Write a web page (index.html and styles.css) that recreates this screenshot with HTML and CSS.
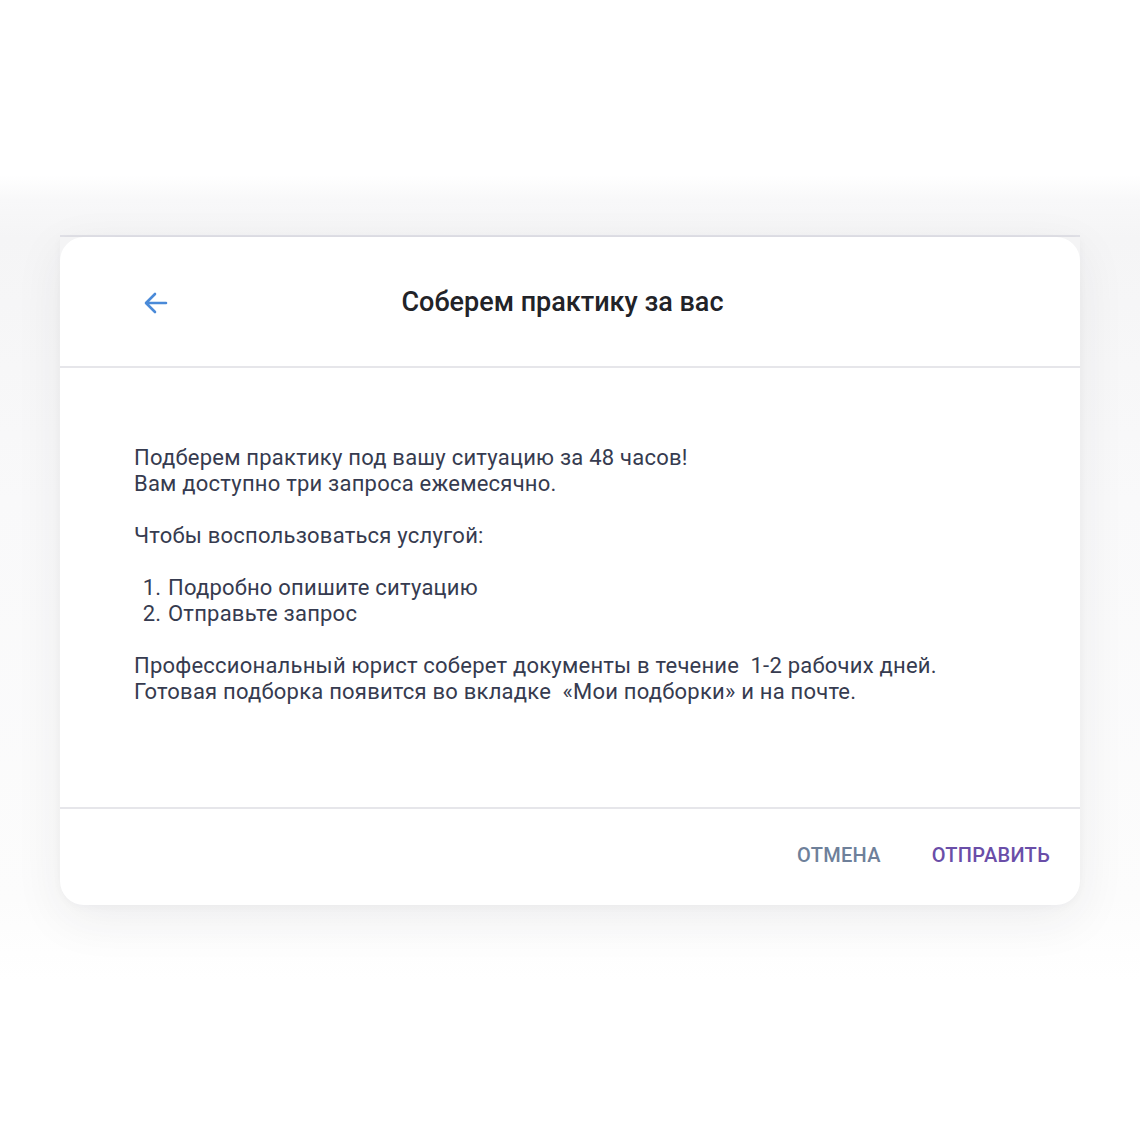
FILE: index.html
```html
<!DOCTYPE html>
<html lang="ru">
<head>
<meta charset="utf-8">
<link rel="stylesheet" href="styles.css">
</head>
<body>
<div class="stage">
  <div class="band"><div class="edge"></div></div>
  <div class="dialog">
    <div class="dialog-header">
      <button class="back" aria-label="Назад">
        <svg width="24" height="22" viewBox="0 0 24 22"><path d="M22 11H3M11 2L2 11l9 9" fill="none" stroke="#4a8ad8" stroke-width="2.6" stroke-linecap="round" stroke-linejoin="round"/></svg>
      </button>
      <h1 class="title">Соберем практику за вас</h1>
    </div>
    <div class="dialog-body">
      <p>Подберем практику под вашу ситуацию за 48 часов!<br>Вам доступно три запроса ежемесячно.</p>
      <p>Чтобы воспользоваться услугой:</p>
      <ol class="steps">
        <li>Подробно опишите ситуацию</li>
        <li>Отправьте запрос</li>
      </ol>
      <p>Профессиональный юрист соберет документы в течение&nbsp; 1-2 рабочих дней.<br>Готовая подборка появится во вкладке&nbsp; «Мои подборки» и на почте.</p>
    </div>
    <div class="dialog-footer">
      <button class="btn btn-cancel">Отмена</button>
      <button class="btn btn-send">Отправить</button>
    </div>
  </div>
</div>
</body>
</html>
```
FILE: styles.css
```css
html, body {
  margin: 0;
  padding: 0;
  background: #ffffff;
}
body {
  font-family: Roboto, "Noto Sans", sans-serif;
  width: 1140px;
  height: 1140px;
  overflow: hidden;
}
.stage {
  padding-top: 175px;
  background: linear-gradient(to bottom, #ffffff 0px, #ffffff 175px, #f8f8f9 200px, #f5f5f6 237px, #f9f9fa 500px, #fcfcfc 900px, #ffffff 980px);
  height: 810px;
}
.band {
  height: 62px;
  display: flex;
  align-items: flex-end;
}
.edge {
  margin: 0 60px;
  flex: 1;
  height: 2px;
  background: #e2e2e8;
}
.dialog {
  margin: 0 60px;
  height: 668px;
  background: #ffffff;
  border-radius: 0 0 24px 24px;
  box-shadow: 0 14px 50px rgba(40, 40, 60, 0.07), 0 2px 10px rgba(40, 40, 60, 0.03);
  display: flex;
  flex-direction: column;
  position: relative;
}
.dialog::before {
  content: "";
  position: absolute;
  left: 0;
  right: 0;
  top: 0;
  height: 24px;
  background: #f4f4f5;
  z-index: 0;
}
.dialog::after {
  content: "";
  position: absolute;
  left: 0;
  right: 0;
  top: 0;
  height: 48px;
  background: #ffffff;
  border-radius: 24px 24px 0 0;
  z-index: 0;
}
.dialog > * {
  position: relative;
  z-index: 1;
}
.dialog-header {
  height: 129px;
  border-bottom: 2px solid #e6e6ea;
  display: flex;
  align-items: center;
  padding: 0 123px 0 84px;
}
.back {
  border: 0;
  background: none;
  padding: 0;
  width: 24px;
  height: 22px;
  display: flex;
  margin-top: 2px;
}
.title {
  flex: 1;
  margin: 0;
  text-align: center;
  font-size: 27px;
  font-weight: 500;
  color: #222328;
  letter-spacing: 0;
}
.dialog-body {
  height: 441px;
  border-bottom: 2px solid #e6e6ea;
  padding: 77px 60px 0 74px;
  box-sizing: border-box;
  font-size: 22px;
  letter-spacing: 0.22px;
  line-height: 26px;
  color: #363b4f;
}
.dialog-body p {
  margin: 0 0 26px 0;
}
.steps {
  margin: 0 0 26px 0;
  padding-left: 33px;
}
.steps li {
  padding-left: 1px;
}
.dialog-footer {
  flex: 1;
  display: flex;
  justify-content: flex-end;
  align-items: center;
  gap: 51px;
  padding: 0 30px 4px 0;
}
.btn {
  border: 0;
  background: none;
  padding: 0;
  font-family: Roboto, "Noto Sans", sans-serif;
  font-size: 20px;
  font-weight: 500;
  text-transform: uppercase;
  letter-spacing: 0.3px;
}
.btn-cancel {
  color: #6e809a;
}
.btn-send {
  color: #6a4ea8;
}
```
